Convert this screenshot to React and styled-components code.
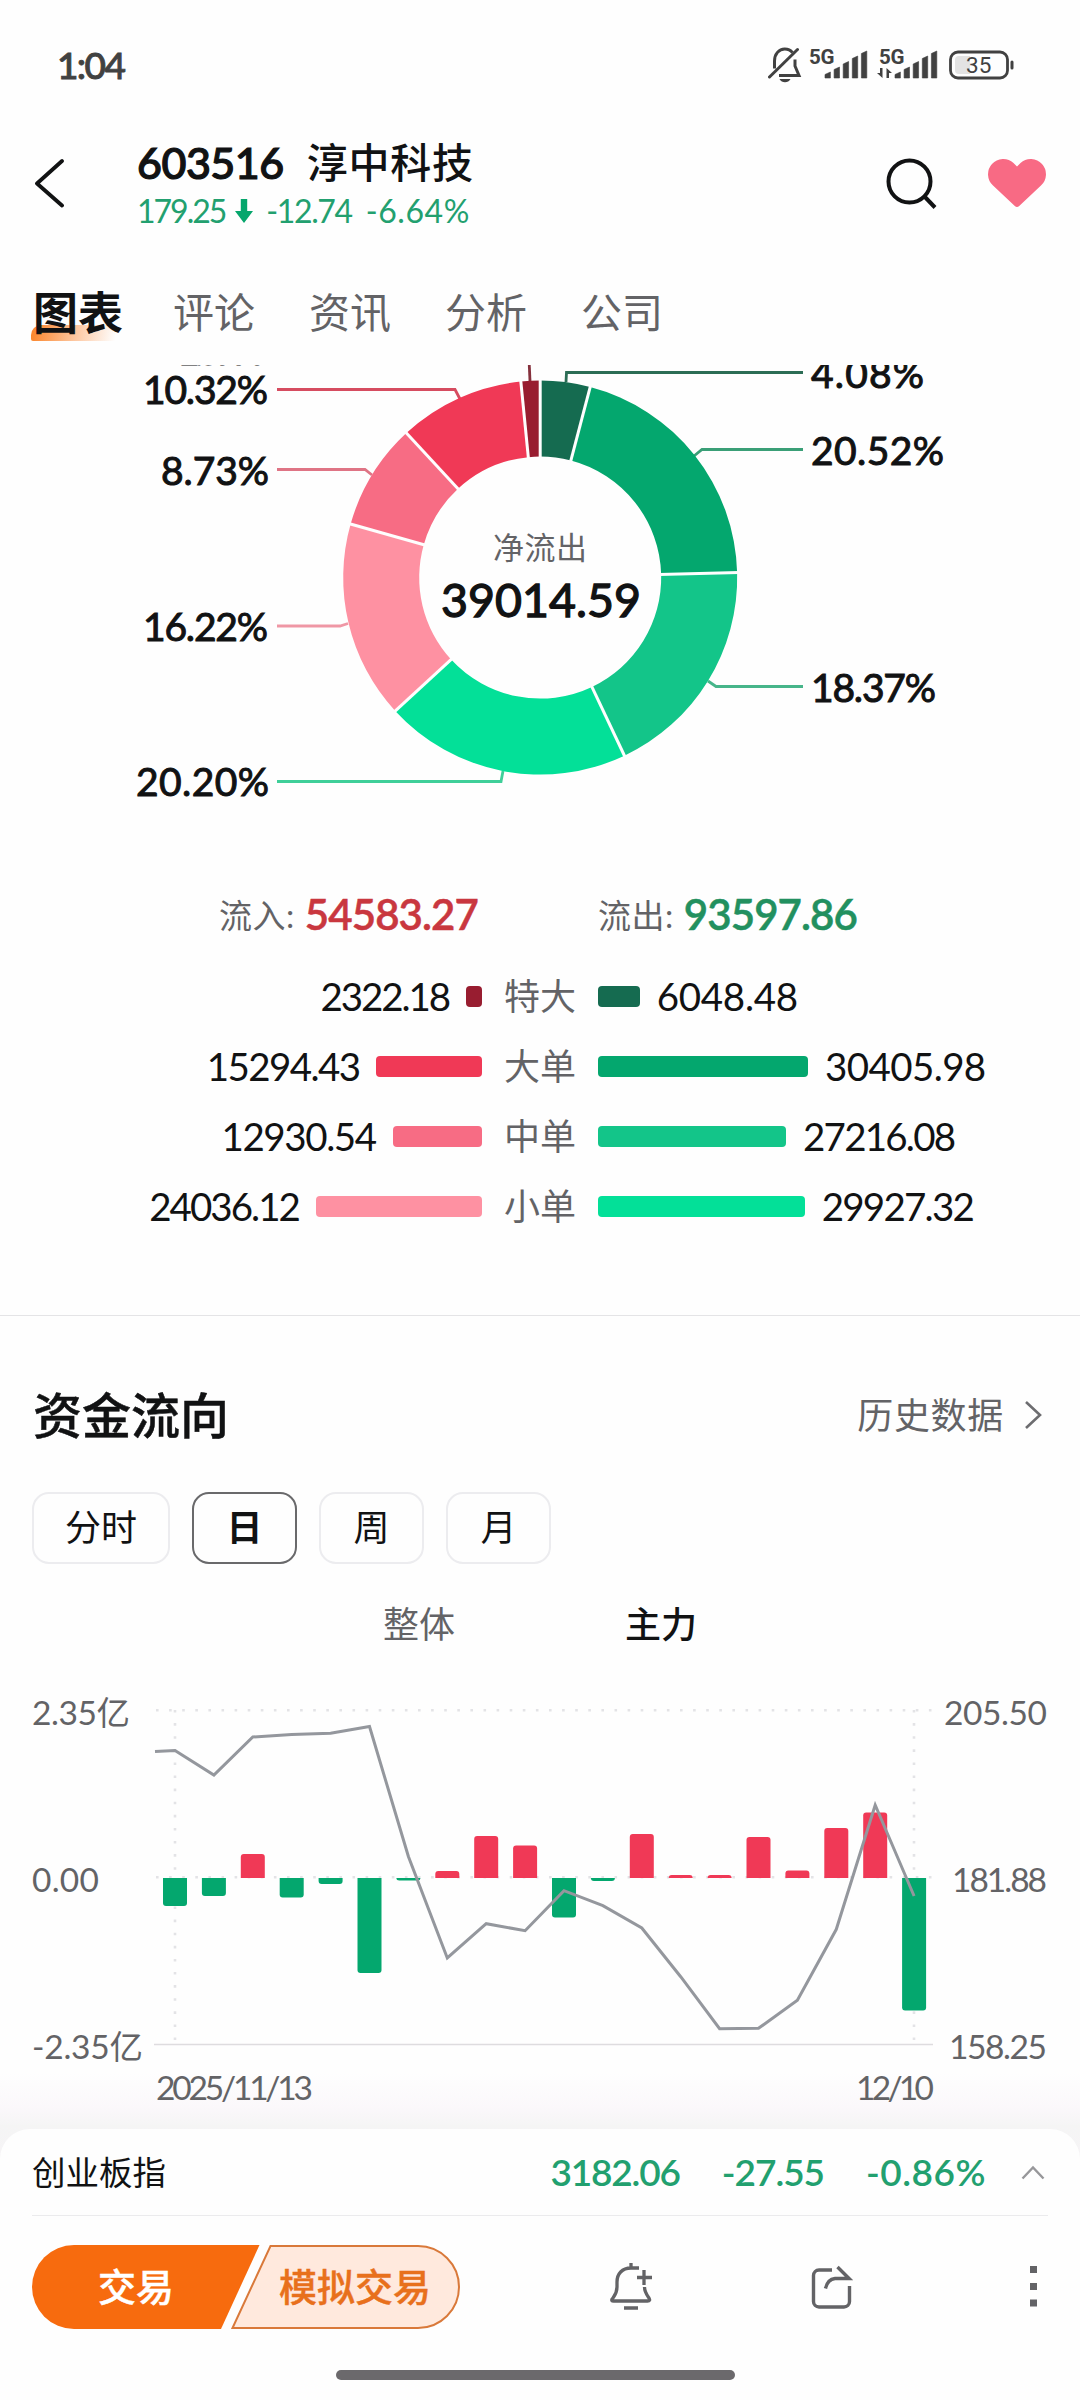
import styled, { createGlobalStyle } from "styled-components";

const colors = {
  text: "#111213",
  secondary: "#636366",
  status: "#414141",
  green: "#22a06f",
  border: "#ececef",
  orange: "#f76b0e",
};

const fonts = `Lato, "Noto Sans CJK SC", sans-serif`;

const GlobalStyle = createGlobalStyle`
  body {
    margin: 0;
    background: #fefefe;
  }
  svg {
    display: block;
    flex: none;
  }
`;

const Screen = styled.div`
  width: 1080px;
  height: 2400px;
  display: flex;
  flex-direction: column;
  overflow: hidden;
  background: #fefefe;
  color: ${colors.text};
  font-family: ${fonts};
  white-space: nowrap;
`;

const StatusBar = styled.div`
  height: 131px;
  display: flex;
  align-items: center;
  justify-content: space-between;
  padding: 0 65px 0 57px;
  box-sizing: border-box;
`;

const Clock = styled.span`
  font-size: 37px;
  font-weight: 500;
  line-height: 48px;
  letter-spacing: -1.6px;
  padding-bottom: 2px;
  color: ${colors.status};
  -webkit-text-stroke: 0.9px;
`;

const Header = styled.header`
  height: 104px;
  display: flex;
  align-items: center;
  padding: 0 34px 0 34px;
  box-sizing: border-box;
`;

const Titles = styled.div`
  flex: 1;
  display: flex;
  flex-direction: column;
  padding: 8px 0 0 72px;
`;

const TitleLine = styled.div`
  display: flex;
  align-items: center;
  gap: 23px;
  height: 48px;
  line-height: 48px;
  font-size: 43px;
  font-weight: 500;
`;

const StockCode = styled.span`
  letter-spacing: -0.5px;
  -webkit-text-stroke: 1.2px;
`;

const StockName = styled.span`
  font-size: 41px;
  letter-spacing: 0.8px;
`;

const QuoteLine = styled.div`
  display: flex;
  align-items: center;
  height: 48px;
  line-height: 48px;
  font-size: 32px;
  color: ${colors.green};
`;

const Quote = styled.span`
  letter-spacing: ${(props) => props.$spacing || 0}px;
  margin-left: ${(props) => props.$left || 0}px;
`;

const HeaderIcons = styled.div`
  display: flex;
  align-items: center;
  gap: 51px;
`;

const Tabs = styled.nav`
  height: 130px;
  display: flex;
  align-items: center;
  gap: 54px;
  padding: 26px 0 0 33px;
  box-sizing: border-box;
`;

const Tab = styled.span`
  position: relative;
  font-size: 41px;
  line-height: 56px;
  color: ${colors.secondary};
  ${(props) =>
    props.$active &&
    `
    font-size: 45px;
    font-weight: 700;
    color: ${colors.text};
    margin-right: -4px;
    &::before {
      content: "";
      position: absolute;
      left: -2px;
      bottom: 0;
      width: 84px;
      height: 16px;
      border-radius: 10px 0 0 2px;
      background: linear-gradient(100deg, #fb8327, #fdc9a4 55%, #fefefe);
    }
  `}
`;

const TabText = styled.span`
  position: relative;
`;

const Content = styled.main`
  height: 1794px;
  display: flex;
  flex-direction: column;
  position: relative;
  overflow: hidden;
`;

const BottomFade = styled.div`
  position: absolute;
  left: 0;
  right: 0;
  bottom: 0;
  height: 86px;
  background: linear-gradient(#fefefe, #fbf8fb 40%, #f5f5f5 62%, #f6f4f6);
`;

const Totals = styled.div`
  height: 70px;
  display: grid;
  grid-template-columns: 379px 1fr;
  align-items: center;
  padding-left: 219px;
`;

const Total = styled.div`
  display: flex;
  align-items: center;
  font-size: 33px;
  line-height: 50px;
  letter-spacing: 0.5px;
  color: ${colors.secondary};
`;

const TotalValue = styled.span`
  margin-left: 10px;
  font-size: 42px;
  font-weight: 600;
  line-height: 48px;
  padding-bottom: 2px;
  letter-spacing: -0.9px;
  color: ${(props) => props.$color};
  -webkit-text-stroke: 0.5px;
`;

const Orders = styled.div`
  padding-top: 11px;
`;

const OrderRow = styled.div`
  height: 70px;
  display: grid;
  grid-template-columns: 482px 116px 482px;
  align-items: center;
`;

const OrderSide = styled.div`
  display: flex;
  align-items: center;
  gap: 17px;
  flex-direction: ${(props) => (props.$reverse ? "row-reverse" : "row")};
`;

const OrderBar = styled.div`
  height: 21px;
  border-radius: 4px;
  background: ${(props) => props.$color};
`;

const OrderValue = styled.span`
  font-size: 38.5px;
  line-height: 50px;
  letter-spacing: ${(props) => props.$spacing}px;
`;

const OrderLabel = styled.span`
  text-align: center;
  font-size: 36px;
  line-height: 50px;
  color: ${colors.secondary};
`;

const Divider = styled.div`
  height: 1px;
  margin: 74px 0 49px;
  background: #e4e4e6;
`;

const SectionHeader = styled.div`
  height: 100px;
  display: flex;
  align-items: center;
  justify-content: space-between;
  padding: 0 38px 0 33px;
`;

const SectionTitle = styled.h2`
  margin: 0;
  font-size: 49px;
  line-height: 60px;
  font-weight: 500;
  -webkit-text-stroke: 0.5px;
`;

const HistoryLink = styled.span`
  display: flex;
  align-items: center;
  gap: 21px;
  font-size: 36px;
  line-height: 50px;
  letter-spacing: 0.7px;
  color: ${colors.secondary};
`;

const Periods = styled.div`
  display: flex;
  gap: 22px;
  padding: 27px 0 0 32px;
`;

const Period = styled.span`
  width: ${(props) => (props.$wide ? 138 : 105)}px;
  height: 72px;
  box-sizing: border-box;
  border: 2px solid ${(props) => (props.$active ? "#69696b" : colors.border)};
  border-radius: 17px;
  font-size: 36px;
  line-height: 67px;
  text-align: center;
  font-weight: ${(props) => (props.$active ? 700 : 400)};
`;

const Modes = styled.div`
  display: flex;
  justify-content: center;
  gap: 170px;
  height: 60px;
  padding-top: 30px;
  line-height: 60px;
  font-size: 36px;
  color: ${colors.secondary};
`;

const Mode = styled.span`
  ${(props) => props.$active && `font-weight: 500; color: ${colors.text};`}
`;

const FlowSvg = styled.svg`
  position: relative;
`;

const Sheet = styled.footer`
  position: relative;
  flex: 1;
  margin-top: -30px;
  padding: 0 32px;
  border-radius: 30px 30px 0 0;
  background: #fefefe;
`;

const IndexRow = styled.div`
  height: 86px;
  display: flex;
  align-items: center;
  padding-right: 3px;
  border-bottom: 1px solid #ebebed;
  line-height: 50px;
`;

const IndexName = styled.span`
  flex: 1;
  font-size: 33.5px;
`;

const IndexValue = styled.span`
  margin-right: ${(props) => props.$right}px;
  font-size: 37px;
  font-weight: 600;
  letter-spacing: ${(props) => props.$spacing}px;
  color: ${colors.green};
`;

const Actions = styled.div`
  display: flex;
  align-items: center;
  height: 84px;
  padding: 29px 11px 0 0;
`;

const TradeButtons = styled.div`
  display: flex;
  width: 428px;
  height: 84px;
  margin-right: 150px;
  position: relative;
  font-size: 38px;
  line-height: 82px;
  font-weight: 500;
`;

const TradeShape = styled.svg`
  position: absolute;
  inset: 0;
`;

const TradeLabel = styled.span`
  position: relative;
  box-sizing: border-box;
  width: 214px;
  padding-left: ${(props) => (props.$primary ? 66 : 33)}px;
  color: ${(props) => (props.$primary ? "#fff" : "#e8701c")};
  -webkit-text-stroke: 0.4px;
`;

const ActionIcons = styled.div`
  flex: 1;
  display: flex;
  align-items: center;
  gap: 159px;

  svg:last-child {
    margin-left: auto;
  }
`;

const HomeBar = styled.div`
  width: 399px;
  height: 10px;
  margin: 41px 0 0 304px;
  border-radius: 5px;
  background: #6b696c;
`;

const slices = [
  { value: 6048.48, color: "#156b50" },
  { value: 30405.98, color: "#04a76e" },
  { value: 27216.08, color: "#13c589" },
  { value: 29927.32, color: "#03e098" },
  { value: 24036.12, color: "#fe91a2" },
  { value: 12930.54, color: "#f76c84" },
  { value: 15294.43, color: "#f03956" },
  { value: 2322.18, color: "#981d30" },
];

const leaders = [
  { points: "566,17 566.5,7.5 803,7.5", color: "#2c6d55" },
  { points: "694,91 702,84.5 803,84.5", color: "#3a9f77" },
  { points: "708,316 716,321.5 803,321.5", color: "#47b58a" },
  { points: "503,406 501,416.5 277,416.5", color: "#3fcf99" },
  { points: "348,258.5 340,261 277,261", color: "#ef97a5" },
  { points: "372,110 365,104.5 277,104.5", color: "#df7485" },
  { points: "460,34 455,24.5 277,24.5", color: "#d64c60" },
  { points: "530,16 529,-6", color: "#85303c" },
];

const shares = [
  { text: "1.57%", x: 177, y: 0, width: 88 },
  { text: "10.32%", x: 143, y: 38.5, width: 125 },
  { text: "8.73%", x: 161, y: 120, width: 108 },
  { text: "16.22%", x: 143, y: 276, width: 125 },
  { text: "20.20%", x: 136, y: 430.5, width: 133 },
  { text: "4.08%", x: 811, y: 22.5, width: 113 },
  { text: "20.52%", x: 811, y: 100, width: 133 },
  { text: "18.37%", x: 811, y: 336.5, width: 125 },
];

const orders = [
  {
    label: "特大",
    inflow: { value: "2322.18", color: "#981d30", spacing: -2.1 },
    outflow: { value: "6048.48", color: "#156b50", spacing: -0.3 },
  },
  {
    label: "大单",
    inflow: { value: "15294.43", color: "#f03956", spacing: -1.6 },
    outflow: { value: "30405.98", color: "#04a76e", spacing: -0.6 },
  },
  {
    label: "中单",
    inflow: { value: "12930.54", color: "#f76c84", spacing: -1.4 },
    outflow: { value: "27216.08", color: "#13c589", spacing: -1.75 },
  },
  {
    label: "小单",
    inflow: { value: "24036.12", color: "#fe91a2", spacing: -1.95 },
    outflow: { value: "29927.32", color: "#03e098", spacing: -1.75 },
  },
];

const MAX_ORDER = 30405.98;
const MAX_BAR = 210;

// heights above (+) or below (-) the zero line, in px
const flows = [
  -28, -18, 24, -19.5, -6, -95, -2.5, 7, 42, 32.5, -39.5, -3, 44, 3, 3, 41, 7.5, 50, 65.5, -132.5,
];

const prices = [
  96.5, 121, 83, 80.5, 79.3, 72.5, 202.5, 304, 269.7, 276.7, 236.7, 251.7, 274, 322.7, 374.7, 374.3,
  346.3, 275.3, 151, 242,
];

const donutCenter = { x: 540.2, y: 212.6 };

const polar = (radius, angle) =>
  `${donutCenter.x + radius * Math.sin(angle)} ${donutCenter.y - radius * Math.cos(angle)}`;

const slicePath = (start, end) =>
  `M${polar(197, start)} A197 197 0 0 1 ${polar(197, end)} L${polar(121, end)} A121 121 0 0 0 ${polar(121, start)}Z`;

const Donut = () => {
  const total = slices.reduce((sum, slice) => sum + slice.value, 0);
  let angle = 0;
  const parts = slices.map((slice) => {
    const start = angle;
    angle += (slice.value / total) * Math.PI * 2;
    return { ...slice, start, end: angle };
  });
  return (
    <svg width="1080" height="515" viewBox="0 0 1080 515" fontFamily={fonts}>
      {leaders.map((leader) => (
        <polyline
          key={leader.points}
          points={leader.points}
          fill="none"
          stroke={leader.color}
          strokeWidth="2.8"
        />
      ))}
      {parts.map((part) => (
        <path key={part.color} d={slicePath(part.start, part.end)} fill={part.color} />
      ))}
      {parts.map((part) => (
        <path
          key={part.color}
          d={`M${polar(119, part.start)} L${polar(199, part.start)}`}
          stroke="#fefefe"
          strokeWidth="3"
        />
      ))}
      <g fill={colors.text} stroke={colors.text} strokeWidth="1">
        {shares.map((share) => (
          <text key={share.text} x={share.x} y={share.y} textLength={share.width} fontSize="39">
            {share.text}
          </text>
        ))}
        <text x="441" y="252" textLength="200" fontSize="46.5" strokeWidth="1.3">
          39014.59
        </text>
      </g>
      <text x="493" y="194" textLength="94" fontSize="31" fill={colors.secondary}>
        净流出
      </text>
    </svg>
  );
};

const flowBar = (height, x) => {
  const tip = 224 - height;
  const r = Math.min(3, Math.abs(height)) * Math.sign(height);
  return `M${x - 12} 224 V${tip + r} Q${x - 12} ${tip} ${x - 9} ${tip} H${x + 9} Q${x + 12} ${tip} ${x + 12} ${tip + r} V224Z`;
};

const FlowChart = () => {
  const xs = flows.map((_, index) => 175 + index * 38.9);
  const line = prices.map((price, index) => `${xs[index]},${price}`).join(" ");
  return (
    <FlowSvg width="1080" height="475" viewBox="0 0 1080 475" fontFamily={fonts}>
      <g stroke="#e3e3e6" strokeWidth="2.6" strokeDasharray="2.6 10.5">
        <path d="M156 56.2H933" />
        <path d="M156 223.2H933" />
        <path d="M175 56V390" />
        <path d="M914 56V390" />
      </g>
      <path d="M154 390.5H933" stroke="#dedcdf" strokeWidth="1.5" />
      {flows.map((flow, index) => (
        <path key={index} d={flowBar(flow, xs[index])} fill={flow > 0 ? "#f03956" : "#04a76e"} />
      ))}
      <polyline points={`155,97.5 ${line}`} fill="none" stroke="#94979d" strokeWidth="3" />
      <g fontSize="33.5" fill={colors.secondary}>
        <text x="32" y="71" textLength="98">2.35亿</text>
        <text x="32" y="238" textLength="67">0.00</text>
        <text x="32" y="405" textLength="111">-2.35亿</text>
        <text x="944" y="71" textLength="103">205.50</text>
        <text x="952" y="238" textLength="95">181.88</text>
        <text x="949" y="405" textLength="98">158.25</text>
        <text x="156" y="446" textLength="157">2025/11/13</text>
        <text x="856" y="446" textLength="78">12/10</text>
      </g>
    </FlowSvg>
  );
};

const signalBars = (x) =>
  [6, 11, 16.5, 22, 27].map((height, index) => {
    const left = x + index * 9.1;
    return (
      <path
        key={index}
        d={`M${left} 31 v${2.5 - height} l5.4 -2.5 v${height} z`}
        stroke={colors.status}
        strokeWidth="0.6"
        strokeLinejoin="round"
      />
    );
  });

const StatusIcons = () => (
  <svg width="247" height="38" viewBox="0 0 247 38" fill={colors.status} fontFamily="Roboto">
    <g fill="none" stroke={colors.status} strokeWidth="3">
      <path d="M6.5 21.5V14c0-7 4.5-12 10.2-12 3.2 0 6 1.3 7.8 3.600" />
      <path d="M27 12.5v6.500l4 9.500H11" />
      <path d="M1.5 30 29.5 2.500" strokeLinecap="round" />
    </g>
    <path d="M11.5 32h11c-1.2 2.200-3.200 3.200-5.500 3.200s-4.300-1-5.500-3.200z" />
    <text x="41" y="17" fontSize="20.5" fontWeight="700" textLength="25.5">5G</text>
    {signalBars(57)}
    <text x="111" y="17" fontSize="20.5" fontWeight="700" textLength="25.5">5G</text>
    <path d="M114.5 21v10l-5.500-5h3v-5zM118.500 31V21l5.500 5h-3v5z" />
    {signalBars(127)}
    <rect x="182.5" y="5" width="57" height="26" rx="7.5" fill="none" stroke={colors.status} strokeWidth="2.8" />
    <path d="M191 9h11v18h-11a4 4 0 0 1-4-4V13a4 4 0 0 1 4-4z" fill="#e3e3e3" />
    <rect x="242.5" y="13.5" width="3" height="9" rx="1.5" />
    <text x="198" y="26" fontSize="22.5" textLength="25.5">35</text>
  </svg>
);

const BackIcon = () => (
  <svg width="31" height="50" viewBox="0 0 31 50">
    <path
      d="M28 3 3 25.500l25 22"
      fill="none"
      stroke={colors.text}
      strokeWidth="3.8"
      strokeLinecap="round"
      strokeLinejoin="round"
    />
  </svg>
);

const SearchIcon = () => (
  <svg width="52" height="52" viewBox="0 0 52 52" fill="none" stroke={colors.text} strokeWidth="4">
    <circle cx="24.5" cy="24.5" r="21" />
    <path d="m39 39 11 11.500" />
  </svg>
);

const HeartIcon = () => (
  <svg width="58" height="50" viewBox="0 0 58 50">
    <path
      d="M26.8 48 5 27.500A15.200 15.200 0 0 1 25.500 5L29 8.500 32.500 5A15.200 15.200 0 0 1 53 27.500L31.200 48Q29 50 26.800 48Z"
      fill="#f86a84"
    />
  </svg>
);

const DownArrow = () => (
  <svg width="18" height="24" viewBox="0 0 18 24">
    <path d="M5.8 0h6.400v12H18L9 24 0 12h5.800z" fill="#06a66c" />
  </svg>
);

const LinkArrow = () => (
  <svg width="17" height="30" viewBox="0 0 17 30">
    <path d="M1 2 15 15 1 28" fill="none" stroke="#6d6d70" strokeWidth="2.6" />
  </svg>
);

const ExpandArrow = () => (
  <svg width="24" height="15" viewBox="0 0 24 15">
    <path d="M1.5 13.500 12 2.500l10.500 11" fill="none" stroke="#97979a" strokeWidth="2.4" />
  </svg>
);

const AlertIcon = () => (
  <svg width="42" height="48" viewBox="0 0 42 48" fill="none" stroke="#636366" strokeWidth="3.3">
    <path d="M21 0v5M29 5H21C12 5 7 11 7 19v5c0 6-2 8-4.500 11.500C1 37.500 2 38 3.500 38h34c2.200 0 2.700-1 1.500-3-2.500-3.500-4.500-6-4.500-11" />
    <path d="M34 7v15M27 14.500h15M14 45h14" />
  </svg>
);

const ShareIcon = () => (
  <svg width="42" height="44" viewBox="0 0 42 44" fill="none" stroke="#636366" strokeWidth="3.4">
    <path d="M21 5H8a5.500 5.500 0 0 0-5.500 5.500v26A5.500 5.500 0 0 0 8 42h25a5.500 5.500 0 0 0 5.500-5.500V21" />
    <path d="M14.500 23.500C16 17 19 14 24 13.500h14L26.500 2" />
  </svg>
);

const MoreIcon = () => (
  <svg width="7" height="42" viewBox="0 0 7 42" fill="#636366">
    <path d="M0 0h7v7H0zM0 17h7v7H0zM0 33.500h7v7H0z" />
  </svg>
);

const OrderFlow = ({ order, reverse }) => (
  <OrderSide $reverse={reverse}>
    <OrderBar $color={order.color} style={{ width: (order.value / MAX_ORDER) * MAX_BAR }} />
    <OrderValue $spacing={order.spacing}>{order.value}</OrderValue>
  </OrderSide>
);

const App = () => (
  <Screen>
    <GlobalStyle />
    <StatusBar>
      <Clock>1:04</Clock>
      <StatusIcons />
    </StatusBar>
    <Header>
      <BackIcon />
      <Titles>
        <TitleLine>
          <StockCode>603516</StockCode>
          <StockName>淳中科技</StockName>
        </TitleLine>
        <QuoteLine>
          <Quote $spacing={-2}>179.25</Quote>
          <Quote $left={10}>
            <DownArrow />
          </Quote>
          <Quote $left={13} $spacing={-1.4}>
            -12.74
          </Quote>
          <Quote $left={14} $spacing={0.6}>
            -6.64%
          </Quote>
        </QuoteLine>
      </Titles>
      <HeaderIcons>
        <SearchIcon />
        <HeartIcon />
      </HeaderIcons>
    </Header>
    <Tabs>
      <Tab $active>
        <TabText>图表</TabText>
      </Tab>
      {["评论", "资讯", "分析", "公司"].map((tab) => (
        <Tab key={tab}>{tab}</Tab>
      ))}
    </Tabs>
    <Content>
      <BottomFade />
      <Donut />
      <Totals>
        <Total>
          流入:<TotalValue $color="#c9373f">54583.27</TotalValue>
        </Total>
        <Total>
          流出:<TotalValue $color="#22905f">93597.86</TotalValue>
        </Total>
      </Totals>
      <Orders>
        {orders.map((order) => (
          <OrderRow key={order.label}>
            <OrderFlow order={order.inflow} reverse />
            <OrderLabel>{order.label}</OrderLabel>
            <OrderFlow order={order.outflow} />
          </OrderRow>
        ))}
      </Orders>
      <Divider />
      <SectionHeader>
        <SectionTitle>资金流向</SectionTitle>
        <HistoryLink>
          历史数据
          <LinkArrow />
        </HistoryLink>
      </SectionHeader>
      <Periods>
        <Period $wide>分时</Period>
        <Period $active>日</Period>
        <Period>周</Period>
        <Period>月</Period>
      </Periods>
      <Modes>
        <Mode>整体</Mode>
        <Mode $active>主力</Mode>
      </Modes>
      <FlowChart />
    </Content>
    <Sheet>
      <IndexRow>
        <IndexName>创业板指</IndexName>
        <IndexValue $right={42} $spacing={-1.2}>
          3182.06
        </IndexValue>
        <IndexValue $right={42} $spacing={-1}>
          -27.55
        </IndexValue>
        <IndexValue $right={35} $spacing={0.5}>
          -0.86%
        </IndexValue>
        <ExpandArrow />
      </IndexRow>
      <Actions>
        <TradeButtons>
          <TradeShape width="428" height="84" viewBox="0 0 428 84">
            <path d="M42 0H227.500L189 84H42A42 42 0 0 1 42 0Z" fill={colors.orange} />
            <path
              d="M238.500 1H386A41 41 0 0 1 386 83H200.500Z"
              fill="#ffe9dd"
              stroke="#d9793a"
              strokeWidth="2"
            />
          </TradeShape>
          <TradeLabel $primary>交易</TradeLabel>
          <TradeLabel>模拟交易</TradeLabel>
        </TradeButtons>
        <ActionIcons>
          <AlertIcon />
          <ShareIcon />
          <MoreIcon />
        </ActionIcons>
      </Actions>
      <HomeBar />
    </Sheet>
  </Screen>
);

export default App;
